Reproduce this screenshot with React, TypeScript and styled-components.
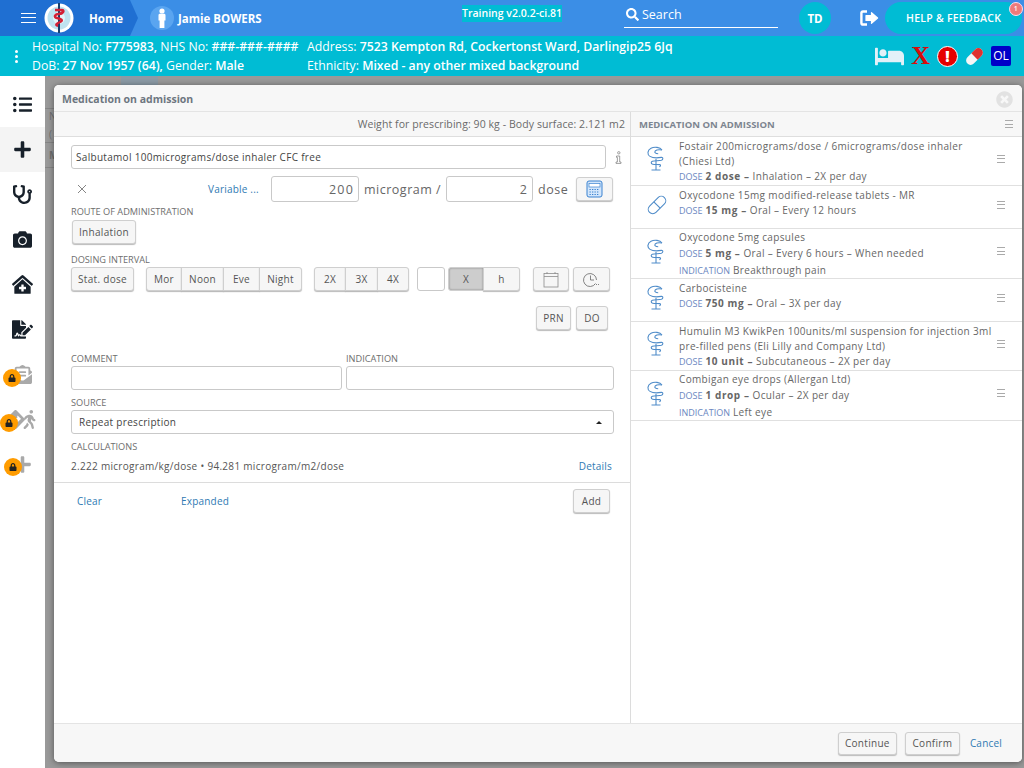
import React from 'react';
import styled, { createGlobalStyle } from 'styled-components';
import {
  FaBed,
  FaCamera,
  FaClinicMedical,
  FaDirections,
  FaEnvelopeOpenText,
  FaFileSignature,
  FaListUl,
  FaLock,
  FaPlus,
  FaSearch,
  FaStethoscope,
  FaTimesCircle,
  FaWalking,
} from 'react-icons/fa';

const GlobalStyle = createGlobalStyle`
  html, body {
    margin: 0;
    padding: 0;
    height: 100%;
    overflow: hidden;
    font-family: "Open Sans", "Liberation Sans", sans-serif;
    color: #555;
  }
  * { box-sizing: border-box; }
`;

const Page = styled.div`
  position: relative;
  width: 1024px;
  height: 768px;
  overflow: hidden;
  background: #fff;
`;

/* top blue bar */
const TopBar = styled.header`
  height: 36px;
  background: #3b8ee6;
  display: flex;
  align-items: center;
  color: #fff;
`;

const HomeCrumb = styled.div`
  position: relative;
  width: 130px;
  height: 36px;
  background: #1f6fd2;
  display: flex;
  align-items: center;
  padding-left: 21px;
  flex-shrink: 0;

  &::after {
    content: '';
    position: absolute;
    left: 130px;
    top: 0;
    border-style: solid;
    border-width: 18px 0 18px 8px;
    border-color: transparent transparent transparent #1f6fd2;
  }
`;

const Burger = styled.div`
  width: 15px;
  height: 10px;
  border-top: 1px solid #fff;
  border-bottom: 1px solid #fff;
  position: relative;
  margin-right: 8px;
  flex-shrink: 0;

  &::after {
    content: '';
    position: absolute;
    left: 0;
    right: 0;
    top: 3px;
    border-top: 1px solid #fff;
  }
`;

const HomeLabel = styled.span`
  font-size: 11.5px;
  font-weight: 700;
  margin-left: 15px;
`;

const PatientBadge = styled.div`
  width: 24px;
  height: 24px;
  border-radius: 50%;
  background: #5aa5f0;
  margin-left: 20px;
  display: flex;
  align-items: center;
  justify-content: center;
  flex-shrink: 0;
`;

const PatientName = styled.span`
  font-size: 11.5px;
  font-weight: 700;
  margin-left: 4px;
  width: 284px;
  flex-shrink: 0;
`;

const TrainingTag = styled.span`
  width: 100px;
  flex-shrink: 0;
  background: #00bcd4;
  font-size: 10.5px;
  font-weight: 600;
  line-height: 17px;
  align-self: flex-start;
  margin-top: 5px;
  white-space: nowrap;
`;

const SearchField = styled.div`
  width: 154px;
  height: 22px;
  flex-shrink: 0;
  margin-left: 62px;
  margin-top: -2px;
  padding: 0 0 4px 2px;
  border-bottom: 1px solid #fff;
  display: flex;
  align-items: center;
  gap: 3px;
  font-size: 12.5px;
  font-weight: 500;
`;

const Avatar = styled.div`
  width: 32px;
  height: 32px;
  border-radius: 50%;
  background: #00bcd4;
  margin-left: 21px;
  display: flex;
  align-items: center;
  justify-content: center;
  font-size: 11.5px;
  font-weight: 700;
  flex-shrink: 0;
`;

const LogoutWrap = styled.div`
  margin-left: 29px;
  display: flex;
  align-items: center;
  flex-shrink: 0;
`;

const HelpPill = styled.div`
  position: relative;
  width: 137px;
  height: 32px;
  margin-left: 5px;
  border-radius: 16px;
  background: #00bcd4;
  display: flex;
  align-items: center;
  padding-left: 21px;
  font-size: 10.5px;
  font-weight: 600;
  letter-spacing: 0.25px;
  white-space: nowrap;
  flex-shrink: 0;
`;

const PillCount = styled.span`
  position: absolute;
  right: -1px;
  top: 0;
  width: 14px;
  height: 14px;
  border-radius: 50%;
  background: #ef7a7a;
  border: 1px solid #fde;
  font-size: 7px;
  line-height: 12px;
  text-align: center;
`;

/* patient strip */
const PatientBar = styled.div`
  height: 40px;
  background: #00bcd4;
  color: #fff;
  display: flex;
  align-items: center;
  font-size: 12.25px;
  line-height: 19px;
`;

const Kebab = styled.div`
  width: 32px;
  display: flex;
  flex-direction: column;
  align-items: center;
  gap: 2px;
  flex-shrink: 0;

  i {
    width: 3px;
    height: 3px;
    border-radius: 50%;
    background: #fff;
  }
`;

const PatientColumn = styled.div<{ $width: number }>`
  width: ${(p) => p.$width}px;
  white-space: nowrap;
  flex-shrink: 0;

  b { font-weight: 600; }
`;

const StatusIcons = styled.div`
  margin-left: auto;
  margin-right: 13px;
  display: flex;
  align-items: center;
  gap: 6px;
`;

const RedX = styled.span`
  margin: 0 1px;
  color: #d80b0b;
  font-family: "Liberation Serif", serif;
  font-weight: 700;
  font-size: 26px;
  line-height: 26px;
`;

const Alert = styled.span`
  width: 21px;
  height: 21px;
  border-radius: 50%;
  background: #e60000;
  border: 1px solid #fff;
  font-size: 15px;
  font-weight: 800;
  line-height: 18px;
  text-align: center;
`;

const OlTag = styled.span`
  width: 20px;
  height: 20px;
  background: #0000c8;
  border-radius: 2px;
  font-size: 12px;
  line-height: 20px;
  text-align: center;
`;

/* body under the bars */
const Body = styled.div`
  display: flex;
  height: 692px;
`;

const SideNav = styled.nav`
  width: 45px;
  background: #fff;
  display: flex;
  flex-direction: column;
  flex-shrink: 0;
`;

const SideItem = styled.div<{ $active?: boolean; $muted?: boolean; $pad?: number; $h?: number }>`
  position: relative;
  height: ${(p) => p.$h ?? 45}px;
  padding-top: ${(p) => p.$pad ?? 0}px;
  background: ${(p) => (p.$active ? '#f4f4f4' : 'transparent')};
  color: ${(p) => (p.$muted ? '#a9a9a9' : '#17202a')};
  display: flex;
  align-items: center;
  justify-content: center;
  font-size: 19px;
`;

const WalkIcon = styled(FaWalking)`
  margin-left: -5px;
`;

const LockBadge = styled.span<{ $left: number; $top: number }>`
  position: absolute;
  left: ${(p) => p.$left}px;
  top: ${(p) => p.$top}px;
  width: 18px;
  height: 18px;
  border-radius: 50%;
  background: #ff9c00;
  color: #222;
  display: flex;
  align-items: center;
  justify-content: center;
  font-size: 8px;
`;

const Backdrop = styled.main`
  flex: 1;
  background: #999;
  padding: 9px 2px 6px 9px;
  position: relative;
`;

const GhostLine = styled.div<{ $top: number }>`
  position: absolute;
  left: 0;
  width: 9px;
  top: ${(p) => p.$top}px;
  border-top: 1px solid #858585;
`;

const GhostText = styled.span<{ $top: number; $bold?: boolean }>`
  position: absolute;
  left: 4px;
  top: ${(p) => p.$top}px;
  font-size: 10px;
  line-height: 12px;
  font-weight: ${(p) => (p.$bold ? 700 : 400)};
  color: #6f6f6f;
`;

const GhostTab = styled.div`
  position: absolute;
  left: 76px;
  top: 0;
  width: 37px;
  height: 9px;
  background: #8b9aa5;
`;

/* dialog */
const Modal = styled.section`
  position: relative;
  height: 100%;
  background: #fff;
  border-radius: 5px;
  box-shadow: 0 1px 6px rgba(0, 0, 0, 0.45);
  display: flex;
  flex-direction: column;
  overflow: hidden;
`;

const ModalTitle = styled.div`
  height: 27px;
  flex-shrink: 0;
  background: #f7f7f7;
  border-bottom: 1px solid #e4e4e4;
  display: flex;
  align-items: center;
  justify-content: space-between;
  padding: 2px 9px 0 8px;
  font-size: 10.5px;
  font-weight: 700;
  color: #6d7680;
`;

const CloseIcon = styled(FaTimesCircle)`
  color: #e2e2e2;
  font-size: 17px;
`;

const Columns = styled.div`
  flex: 1;
  display: flex;
  min-height: 0;
`;

const LeftPane = styled.div`
  width: 577px;
  flex-shrink: 0;
  border-right: 1px solid #dcdcdc;
  display: flex;
  flex-direction: column;
`;

const RightPane = styled.div`
  flex: 1;
  display: flex;
  flex-direction: column;
`;

const PaneHead = styled.div`
  height: 25px;
  flex-shrink: 0;
  background: #f7f7f7;
  border-bottom: 1px solid #dedede;
  display: flex;
  align-items: center;
`;

const WeightHead = styled(PaneHead)`
  justify-content: flex-end;
  padding-right: 5px;
  font-size: 10.5px;
  letter-spacing: 0.08px;
  color: #6a6a6a;
`;

const ListHead = styled(PaneHead)`
  justify-content: space-between;
  padding: 0 9px 0 8px;
  font-size: 9.5px;
  font-weight: 700;
  color: #7d8590;
`;

const Form = styled.div`
  padding: 8px 16px 0 17px;
`;

const TextBox = styled.div<{ $h?: number; $w?: number; $right?: boolean; $grow?: boolean; $left?: number; $pad?: number }>`
  height: ${(p) => p.$h ?? 24}px;
  width: ${(p) => (p.$w ? `${p.$w}px` : 'auto')};
  flex: ${(p) => (p.$grow ? '1' : 'none')};
  margin-left: ${(p) => p.$left ?? 0}px;
  border: 1px solid #c9c9c9;
  border-radius: 3px;
  background: #fff;
  display: flex;
  align-items: center;
  justify-content: ${(p) => (p.$right ? 'flex-end' : 'space-between')};
  padding: 0 4px 0 ${(p) => p.$pad ?? 4}px;
  font-size: 10px;
  letter-spacing: 0.3px;
  color: #444;
  white-space: nowrap;
`;

const DrugRow = styled.div`
  display: flex;
  align-items: center;
  margin-right: -1px;
`;

const InfoGlyph = styled.svg`
  margin-left: 9px;
  margin-right: -7px;
  flex-shrink: 0;
`;

const DoseRow = styled.div`
  display: flex;
  align-items: center;
  height: 26px;
  margin-top: 7px;
`;

const ClearCross = styled.span`
  width: 137px;
  padding-left: 6px;
  display: flex;
  align-items: center;
`;

const Link = styled.span<{ $w?: number; $left?: number; $lift?: number }>`
  display: inline-block;
  width: ${(p) => (p.$w ? `${p.$w}px` : 'auto')};
  margin-left: ${(p) => p.$left ?? 0}px;
  padding-bottom: ${(p) => p.$lift ?? 0}px;
  color: #2f7ab3;
  font-size: 10px;
  letter-spacing: 0.2px;
`;

const Unit = styled.span<{ $m?: number }>`
  font-size: 12.5px;
  letter-spacing: 0.5px;
  color: #666;
  margin: 0 ${(p) => p.$m ?? 4}px;
  white-space: nowrap;
`;

const Amount = styled(Unit)`
  letter-spacing: 1.2px;
  margin: 0;
`;

const FieldLabel = styled.div<{ $top?: number }>`
  margin-top: ${(p) => p.$top ?? 0}px;
  margin-bottom: 2px;
  height: 12px;
  line-height: 14px;
  font-size: 9.2px;
  color: #6e6e6e;
  white-space: nowrap;
`;

const Btn = styled.button<{ $w: number; $pressed?: boolean; $left?: number; $right?: number }>`
  width: ${(p) => p.$w}px;
  height: 24px;
  margin-left: ${(p) => p.$left ?? 0}px;
  margin-right: ${(p) => p.$right ?? 0}px;
  padding: 0;
  border: 1px solid #cfcfcf;
  border-radius: 3px;
  background: ${(p) => (p.$pressed ? '#cdcdcd' : '#f6f6f6')};
  box-shadow: ${(p) => (p.$pressed ? 'inset 0 0 2px #777' : '0 1px 1px #bbb')};
  font: inherit;
  font-size: 10px;
  letter-spacing: 0.3px;
  color: #555;
  display: inline-flex;
  align-items: center;
  justify-content: center;
  flex-shrink: 0;
`;

const Group = styled.div<{ $left: number }>`
  display: flex;
  margin-left: ${(p) => p.$left}px;

  ${Btn} { border-radius: 0; margin-left: -1px; }
  ${Btn}:first-child { border-radius: 3px 0 0 3px; margin-left: 0; }
  ${Btn}:last-child { border-radius: 0 3px 3px 0; }
`;

const ButtonLine = styled.div<{ $top?: number; $end?: boolean }>`
  display: flex;
  margin-top: ${(p) => p.$top ?? 0}px;
  justify-content: ${(p) => (p.$end ? 'flex-end' : 'flex-start')};
`;

const TwoCol = styled.div`
  display: grid;
  grid-template-columns: 271px 268px;
  column-gap: 4px;
  margin-top: 22px;
`;

const Caret = styled.span`
  width: 0;
  height: 0;
  margin-right: 7px;
  border-left: 3px solid transparent;
  border-right: 3px solid transparent;
  border-bottom: 3px solid #222;
`;

const CalcLine = styled.div`
  margin-top: 6px;
  display: flex;
  justify-content: space-between;
  align-items: center;
  height: 16px;
  padding-right: 2px;
  font-size: 10px;
  letter-spacing: 0.3px;
  color: #555;
`;

const ActionRow = styled.div`
  margin-top: 8px;
  height: 31px;
  border-top: 1px solid #dcdcdc;
  display: flex;
  align-items: flex-end;
  padding: 0 20px 0 23px;
`;

const Footer = styled.div`
  height: 39px;
  flex-shrink: 0;
  background: #f7f7f7;
  border-top: 1px solid #e4e4e4;
  display: flex;
  align-items: center;
  justify-content: flex-end;
  padding-right: 20px;

  ${Btn} { height: 23px; }
`;

/* medication list */
const MedRow = styled.div<{ $h: number }>`
  height: ${(p) => p.$h}px;
  border-bottom: 1px solid #e0e0e0;
  display: flex;
  align-items: center;
  padding-left: 15px;
  padding-right: 17px;
`;

const MedIcon = styled.div`
  width: 33px;
  flex-shrink: 0;
  display: flex;
  margin-top: -5px;
`;

const MedText = styled.div<{ $tall?: boolean }>`
  flex: 1;
  align-self: flex-start;
  padding-top: ${(p) => (p.$tall ? 0 : 1.5)}px;
  padding-right: 3px;
  font-size: 10px;
  letter-spacing: 0.35px;
  line-height: ${(p) => (p.$tall ? 16 : 15)}px;
  color: #666;
`;

const Tag = styled.span`
  color: #6b87bf;
  font-size: 9px;
  letter-spacing: 0;
  margin-right: 3px;
`;

const DoseValue = styled.b`
  font-weight: 700;
  letter-spacing: 0.6px;
  color: #666;
`;

const RowMenu = styled.div<{ $lift?: boolean }>`
  width: 8px;
  height: 8px;
  flex-shrink: 0;
  margin-top: ${(p) => (p.$lift ? -5 : 0)}px;
  border-top: 1px solid #aaa;
  border-bottom: 1px solid #aaa;
  position: relative;

  &::after {
    content: '';
    position: absolute;
    left: 0;
    right: 0;
    top: 2.5px;
    border-top: 1px solid #aaa;
  }
`;

const Logo = () => (
  <svg width="30" height="30" viewBox="0 0 30 30" style={{ flexShrink: 0 }}>
    <circle cx="15" cy="15" r="14.5" fill="#fff" />
    <circle cx="15" cy="15" r="11.5" fill="#bfe3f0" />
    <circle cx="15" cy="15" r="6" fill="#e5f4f8" />
    <path d="M15 0v30" stroke="#17406d" strokeWidth="2" />
    <path d="M11 7h7c3 0 1 4-3 4s-6 3-2 4 7 2 3 4-5 3-2 4" fill="none" stroke="#d42035" strokeWidth="2.4" />
  </svg>
);

const Person = () => (
  <svg width="10" height="20" viewBox="0 0 10 20" fill="#fff">
    <circle cx="5" cy="3" r="2.6" />
    <path d="M1.5 7.2c0-1 .8-1.4 1.6-1.4h3.8c.8 0 1.6.4 1.6 1.4v5.4H7.4V20H2.6v-7.4H1.5z" />
  </svg>
);

const LogoutIcon = () => (
  <svg width="20" height="16" viewBox="0 0 20 16" fill="none" stroke="#fff" strokeWidth="2.4">
    <path d="M7 1.5H3c-1 0-1.6.6-1.6 1.6v9.8c0 1 .6 1.6 1.6 1.6h4" />
    <path d="M11.5 2.6 17.6 8l-6.1 5.4V10.4H6V5.6h5.5z" fill="#fff" strokeWidth="1.2" strokeLinejoin="round" />
  </svg>
);

const PillIcon = () => (
  <svg width="21" height="21" viewBox="0 0 21 21">
    <g transform="rotate(-45 10.5 10.5)">
      <rect x="0.5" y="6" width="20" height="9" rx="4.5" fill="#f6f6f6" />
      <path d="M10.5 6h5.5a4.5 4.5 0 0 1 0 9h-5.5z" fill="#e0312f" />
    </g>
  </svg>
);

const CalcIcon = () => (
  <svg width="17" height="18" viewBox="0 0 17 18">
    <rect x="1" y="1" width="15" height="16" rx="2" fill="#d3e6fb" stroke="#3a82d0" />
    <rect x="3" y="3.5" width="11" height="3.5" fill="#fff" stroke="#3a82d0" strokeWidth="0.7" />
    <path d="M3.5 9.5h10M3.5 12h10M3.5 14.5h10" stroke="#3a82d0" strokeWidth="1.2" strokeDasharray="1.3 1.2" />
  </svg>
);

const CalendarIcon = () => (
  <svg width="16" height="17" viewBox="0 0 16 17" fill="none" stroke="#8c8c8c" strokeWidth="0.8">
    <rect x="1" y="2.5" width="14" height="13.5" />
    <path d="M1 5.5h14" />
    <path d="M4 1v2M12 1v2" />
  </svg>
);

const ClockIcon = () => (
  <svg width="17" height="15" viewBox="0 0 17 15" fill="none" stroke="#777" strokeWidth="0.9">
    <path d="M12.5 11.5a6.5 6.5 0 1 1 1-3.5" />
    <path d="M7.5 3.5V8h3.5" />
    <path d="M11 12.5h1M13 12.5h1M15 12.5h1" />
  </svg>
);

const Caduceus = () => (
  <svg width="19" height="25" viewBox="0 0 19 25" fill="none" stroke="#4f8cc9" strokeWidth="1.1">
    <path d="M10 13v11M5.5 24h9" />
    <path d="M16 4C14 1.2 8.5.4 5 2.2 1.2 4.2 1 8.6 4 10.4c2.6 1.6 8 1.6 11.4 1 1.8-.3 2 2.2 0 2.8-2.2.6-6.6.4-9 1-1.6.5-1.6 2.6.2 3 2 .4 5.4.2 7 .4 1.4.3 1.2 2-.4 2.2" />
    <path d="M16 4c-2.4-.4-5.6-.2-6.8 1-1.2 1.4.4 2.8 3 2.8" />
  </svg>
);

const Capsule = () => (
  <svg width="22" height="22" viewBox="0 0 22 22" fill="none" stroke="#4f8cc9" strokeWidth="1.1">
    <g transform="rotate(-45 11 11)">
      <rect x="0.5" y="6.5" width="21" height="9" rx="4.5" />
      <path d="M11 6.5v9" />
    </g>
  </svg>
);

type Med = { h: number; name: string; dose: string; rest: string; indication?: string; capsule?: boolean };

const meds: Med[] = [
  { h: 49, name: 'Fostair 200micrograms/dose / 6micrograms/dose inhaler (Chiesi Ltd)', dose: '2 dose', rest: 'Inhalation – 2X per day' },
  { h: 43, name: 'Oxycodone 15mg modified-release tablets - MR', dose: '15 mg', rest: 'Oral – Every 12 hours', capsule: true },
  { h: 50, name: 'Oxycodone 5mg capsules', dose: '5 mg', rest: 'Oral – Every 6 hours – When needed', indication: 'Breakthrough pain' },
  { h: 43, name: 'Carbocisteine', dose: '750 mg', rest: 'Oral – 3X per day' },
  { h: 49, name: 'Humulin M3 KwikPen 100units/ml suspension for injection 3ml pre-filled pens (Eli Lilly and Company Ltd)', dose: '10 unit', rest: 'Subcutaneous – 2X per day' },
  { h: 50, name: 'Combigan eye drops (Allergan Ltd)', dose: '1 drop', rest: 'Ocular – 2X per day', indication: 'Left eye' },
];

export default function App() {
  return (
    <Page>
      <GlobalStyle />
      <TopBar>
        <HomeCrumb>
          <Burger />
          <Logo />
          <HomeLabel>Home</HomeLabel>
        </HomeCrumb>
        <PatientBadge>
          <Person />
        </PatientBadge>
        <PatientName>Jamie BOWERS</PatientName>
        <TrainingTag>Training v2.0.2-ci.81</TrainingTag>
        <SearchField>
          <FaSearch size={13} />
          Search
        </SearchField>
        <Avatar>TD</Avatar>
        <LogoutWrap>
          <LogoutIcon />
        </LogoutWrap>
        <HelpPill>
          HELP &amp; FEEDBACK
          <PillCount>1</PillCount>
        </HelpPill>
      </TopBar>

      <PatientBar>
        <Kebab>
          <i />
          <i />
          <i />
        </Kebab>
        <PatientColumn $width={275}>
          Hospital No: <b>F775983,</b> NHS No: <b>###-###-####</b>
          <br />
          DoB: <b>27 Nov 1957 (64),</b> Gender: <b>Male</b>
        </PatientColumn>
        <PatientColumn $width={500}>
          Address: <b>7523 Kempton Rd, Cockertonst Ward, Darlingip25 6Jq</b>
          <br />
          Ethnicity: <b>Mixed - any other mixed background</b>
        </PatientColumn>
        <StatusIcons>
          <FaBed size={29} color="#e3f1f8" />
          <RedX>X</RedX>
          <Alert>!</Alert>
          <PillIcon />
          <OlTag>OL</OlTag>
        </StatusIcons>
      </PatientBar>

      <Body>
        <SideNav>
          <SideItem $h={51} $pad={6}>
            <FaListUl />
          </SideItem>
          <SideItem $active>
            <FaPlus />
          </SideItem>
          <SideItem>
            <FaStethoscope />
          </SideItem>
          <SideItem>
            <FaCamera />
          </SideItem>
          <SideItem>
            <FaClinicMedical size={21} />
          </SideItem>
          <SideItem>
            <FaFileSignature size={21} />
          </SideItem>
          <SideItem $muted>
            <FaEnvelopeOpenText />
            <LockBadge $left={3} $top={17}>
              <FaLock />
            </LockBadge>
          </SideItem>
          <SideItem $muted>
            <FaDirections size={19} />
            <WalkIcon size={19} />
            <LockBadge $left={0} $top={17}>
              <FaLock />
            </LockBadge>
          </SideItem>
          <SideItem $muted>
            <FaPlus />
            <LockBadge $left={4} $top={16}>
              <FaLock />
            </LockBadge>
          </SideItem>
        </SideNav>

        <Backdrop>
          <GhostTab />
          <GhostLine $top={32} />
          <GhostText $top={34}>N</GhostText>
          <GhostText $top={52}>(</GhostText>
          <GhostLine $top={66} />
          <GhostText $top={73} $bold>
            M
          </GhostText>
          <GhostLine $top={91} />

          <Modal>
            <ModalTitle>
              Medication on admission
              <CloseIcon />
            </ModalTitle>
            <Columns>
              <LeftPane>
                <WeightHead>Weight for prescribing: 90 kg - Body surface: 2.121 m2</WeightHead>
                <Form>
                  <DrugRow>
                    <TextBox $grow>Salbutamol 100micrograms/dose inhaler CFC free</TextBox>
                    <InfoGlyph width="7" height="13" viewBox="0 0 7 13" fill="none" stroke="#888" strokeWidth="0.8">
                      <circle cx="3.8" cy="1.8" r="1.2" />
                      <path d="M1.5 5h3.2v6H6v1.4H1v-1.4h1.4V6.4H1.5z" />
                    </InfoGlyph>
                  </DrugRow>
                  <DoseRow>
                    <ClearCross>
                      <svg width="10" height="10" viewBox="0 0 10 10" stroke="#777" strokeWidth="0.9">
                        <path d="M1 1l8 8M9 1l-8 8" />
                      </svg>
                    </ClearCross>
                    <Link $w={63}>Variable ...</Link>
                    <TextBox $h={26} $w={88} $right>
                      <Amount>200</Amount>
                    </TextBox>
                    <Unit $m={5}>microgram /</Unit>
                    <TextBox $h={26} $w={87} $right>
                      <Amount>2</Amount>
                    </TextBox>
                    <Unit $m={5}>dose</Unit>
                    <Btn $w={37} $left={3}>
                      <CalcIcon />
                    </Btn>
                  </DoseRow>
                  <FieldLabel $top={3}>ROUTE OF ADMINISTRATION</FieldLabel>
                  <ButtonLine $top={3}>
                    <Btn $w={64} $left={1}>
                      Inhalation
                    </Btn>
                  </ButtonLine>
                  <FieldLabel $top={9}>DOSING INTERVAL</FieldLabel>
                  <ButtonLine>
                    <Btn $w={63}>Stat. dose</Btn>
                    <Group $left={12}>
                      <Btn $w={36}>Mor</Btn>
                      <Btn $w={43}>Noon</Btn>
                      <Btn $w={37}>Eve</Btn>
                      <Btn $w={43}>Night</Btn>
                    </Group>
                    <Group $left={12}>
                      <Btn $w={32}>2X</Btn>
                      <Btn $w={33}>3X</Btn>
                      <Btn $w={32}>4X</Btn>
                    </Group>
                    <TextBox $w={28} $left={8} />
                    <Group $left={3}>
                      <Btn $w={36} $pressed>
                        X
                      </Btn>
                      <Btn $w={37}>h</Btn>
                    </Group>
                    <Btn $w={36} $left={13}>
                      <CalendarIcon />
                    </Btn>
                    <Btn $w={37} $left={4}>
                      <ClockIcon />
                    </Btn>
                  </ButtonLine>
                  <ButtonLine $top={15} $end>
                    <Btn $w={35}>PRN</Btn>
                    <Btn $w={32} $left={5} $right={6}>
                      DO
                    </Btn>
                  </ButtonLine>
                  <TwoCol>
                    <FieldLabel>COMMENT</FieldLabel>
                    <FieldLabel>INDICATION</FieldLabel>
                    <TextBox />
                    <TextBox />
                  </TwoCol>
                  <FieldLabel $top={6}>SOURCE</FieldLabel>
                  <TextBox $pad={7}>
                    Repeat prescription
                    <Caret />
                  </TextBox>
                  <FieldLabel $top={6}>CALCULATIONS</FieldLabel>
                  <CalcLine>
                    <span>2.222 microgram/kg/dose • 94.281 microgram/m2/dose</span>
                    <Link>Details</Link>
                  </CalcLine>
                </Form>
                <ActionRow>
                  <Link $w={104} $lift={5}>
                    Clear
                  </Link>
                  <Link $lift={5}>Expanded</Link>
                  <Btn $w={37} style={{ marginLeft: 'auto' }}>
                    Add
                  </Btn>
                </ActionRow>
              </LeftPane>

              <RightPane>
                <ListHead>
                  MEDICATION ON ADMISSION
                  <RowMenu />
                </ListHead>
                {meds.map((m) => (
                  <MedRow key={m.name} $h={m.h}>
                    <MedIcon>{m.capsule ? <Capsule /> : <Caduceus />}</MedIcon>
                    <MedText $tall={!!m.indication}>
                      {m.name}
                      <br />
                      <Tag>DOSE</Tag>
                      <DoseValue>{m.dose} –</DoseValue> {m.rest}
                      {m.indication && (
                        <>
                          <br />
                          <Tag>INDICATION</Tag>
                          {m.indication}
                        </>
                      )}
                    </MedText>
                    <RowMenu $lift />
                  </MedRow>
                ))}
              </RightPane>
            </Columns>
            <Footer>
              <Btn $w={59}>Continue</Btn>
              <Btn $w={55} $left={8}>
                Confirm
              </Btn>
              <Link $left={10}>Cancel</Link>
            </Footer>
          </Modal>
        </Backdrop>
      </Body>
    </Page>
  );
}
